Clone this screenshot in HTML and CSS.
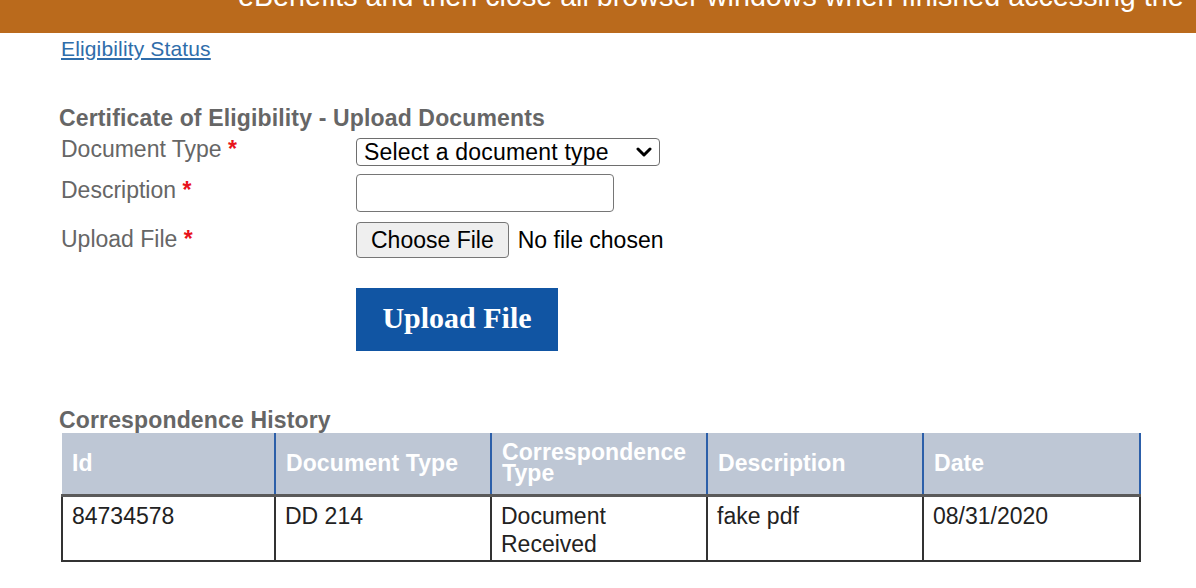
FILE: index.html
```html
<!DOCTYPE html>
<html lang="en">
<head>
<meta charset="utf-8">
<title>Certificate of Eligibility - Upload Documents</title>
<link rel="stylesheet" href="styles.css">
</head>
<body>
<header class="banner">
  <p class="banner-text">eBenefits and then close all browser windows when finished accessing the</p>
</header>
<main class="page">
  <a class="status-link" href="#">Eligibility Status</a>

  <h2 class="section-title upload-title">Certificate of Eligibility - Upload Documents</h2>
  <form class="upload-form">
    <div class="form-row row-type">
      <label class="form-label" for="docType">Document Type <span class="req">*</span></label>
      <div class="select-wrap">
        <select id="docType" class="select">
          <option>Select a document type</option>
        </select>
        <svg class="chevron" width="16" height="12" viewBox="0 0 16 12" aria-hidden="true"><path d="M2 3 L8 9 L14 3" fill="none" stroke="#000" stroke-width="3" stroke-linecap="round" stroke-linejoin="round"/></svg>
      </div>
    </div>
    <div class="form-row row-desc">
      <label class="form-label" for="desc">Description <span class="req">*</span></label>
      <input id="desc" class="text-input" type="text">
    </div>
    <div class="form-row row-file">
      <label class="form-label" for="file">Upload File <span class="req">*</span></label>
      <input id="file" class="file-input" type="file">
    </div>
    <div class="form-actions">
      <button type="button" class="upload-btn">Upload File</button>
    </div>
  </form>

  <h2 class="section-title history-title">Correspondence History</h2>
  <table class="history">
    <colgroup>
      <col class="col-first">
      <col class="col-std">
      <col class="col-std">
      <col class="col-std">
      <col class="col-last">
    </colgroup>
    <thead>
      <tr>
        <th>Id</th>
        <th>Document Type</th>
        <th>Correspondence Type</th>
        <th>Description</th>
        <th>Date</th>
      </tr>
    </thead>
    <tbody>
      <tr>
        <td>84734578</td>
        <td>DD 214</td>
        <td>Document Received</td>
        <td>fake pdf</td>
        <td>08/31/2020</td>
      </tr>
    </tbody>
  </table>
</main>
</body>
</html>
```

FILE: styles.css
```css
* { box-sizing: border-box; }

html, body {
  margin: 0;
  padding: 0;
  background: #fff;
}

body {
  font-family: "Liberation Sans", Arial, Helvetica, sans-serif;
  font-size: 23px;
  color: #666;
}

.banner {
  height: 33px;
  background: #BA6A1C;
  overflow: hidden;
}

.banner-text {
  margin: -19px 0 0 0;
  padding-left: 238px;
  color: #fff;
  font-size: 28.7px;
  line-height: 30px;
  white-space: nowrap;
}

.page {
  padding-left: 61px;
}

.status-link {
  display: inline-block;
  margin-top: 3px;
  color: #2F6DAA;
  font-size: 21px;
  line-height: 25px;
  letter-spacing: 0.15px;
  text-decoration: underline;
  text-underline-offset: 2px;
}

.section-title {
  margin: 0 0 0 -2px;
  font-size: 23px;
  line-height: 25px;
  font-weight: bold;
  color: #666;
  letter-spacing: 0.15px;
}

.upload-title {
  margin-top: 44px;
}

.upload-form {
  margin-top: 3px;
}

.form-row {
  display: flex;
  align-items: flex-start;
}

.form-label {
  width: 295px;
  flex: none;
  line-height: 25px;
  color: #666;
}

.req {
  color: #E8141B;
  font-weight: bold;
}

.row-type .form-label { padding-top: 3px; }
.row-type .select-wrap { margin-top: 4px; }
.row-desc { margin-top: 8px; }
.row-desc .form-label { padding-top: 4px; }
.row-file { margin-top: 10px; }
.row-file .form-label { padding-top: 5px; }

.select-wrap {
  position: relative;
  width: 304px;
  height: 28px;
}

.select {
  appearance: none;
  -webkit-appearance: none;
  width: 100%;
  height: 100%;
  margin: 0;
  padding: 0 0 0 7px;
  border: 1px solid #6E6E6E;
  border-radius: 4px;
  background: #fff;
  color: #000;
  font-family: inherit;
  font-size: 23px;
  letter-spacing: 0.2px;
}

.chevron {
  position: absolute;
  right: 8px;
  top: 8px;
  pointer-events: none;
}

.text-input {
  width: 258px;
  height: 38px;
  margin: 0;
  border: 1px solid #767676;
  border-radius: 4px;
  background: #fff;
  font-family: inherit;
  font-size: 23px;
}

.file-input {
  height: 36px;
  margin: 0;
  padding: 0;
  font-family: inherit;
  font-size: 23px;
  color: #000;
}

.file-input::file-selector-button {
  height: 36px;
  margin: 0 9px 0 0;
  padding: 0 14px;
  border: 1px solid #767676;
  border-radius: 4px;
  background: #EFEFEF;
  color: #000;
  font-family: inherit;
  font-size: 23px;
}

.form-actions {
  margin-top: 30px;
  padding-left: 295px;
}

.upload-btn {
  width: 202px;
  height: 63px;
  margin: 0;
  padding: 0 0 3px;
  border: none;
  background: #1155A3;
  color: #fff;
  font-family: "Liberation Serif", "Times New Roman", serif;
  font-weight: bold;
  font-size: 30px;
}

.history-title {
  margin-top: 57px;
}

.history {
  margin-top: 0;
  width: 1078px;
  border-collapse: collapse;
  table-layout: fixed;
}

.col-first { width: 213px; }
.col-std { width: 216px; }
.col-last { width: 217px; }

.history th {
  height: 62px;
  padding: 0 10px;
  background: #BEC7D5;
  color: #fff;
  font-weight: bold;
  font-size: 23px;
  line-height: 21px;
  text-align: left;
  vertical-align: middle;
  border-right: 2px solid #2C5FA9;
  border-bottom: 3px solid #5A5A5A;
  letter-spacing: 0.1px;
}

.history td {
  height: 66px;
  padding: 5px 9px 0;
  color: #222;
  font-size: 23px;
  line-height: 28px;
  vertical-align: top;
  border: 2px solid #333;
  border-top: none;
}
```
